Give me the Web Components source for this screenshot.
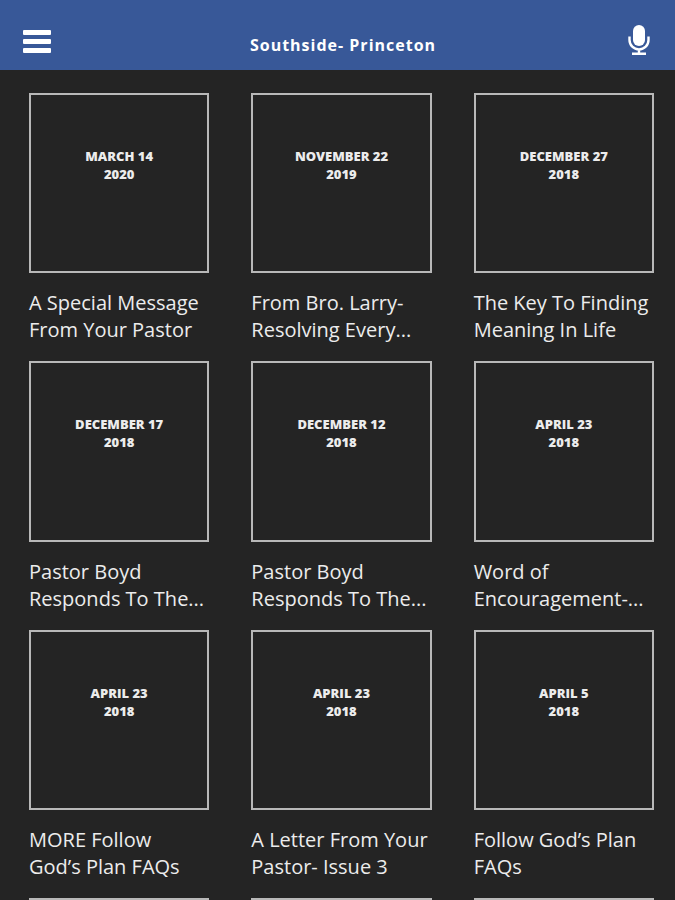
<!DOCTYPE html>
<html lang="en">
<head>
<meta charset="utf-8">
<meta name="viewport" content="width=device-width, initial-scale=1">
<title>Southside- Princeton</title>
<style>
html { scrollbar-width: none; }
html, body { margin: 0; background: #242424; color: #ececec; font-family: "Open Sans", sans-serif; }
</style>
</head>
<body>
<messages-page></messages-page>
<script>
const define = (name, html, setup) => {
  const template = document.createElement('template');
  template.innerHTML = html;
  customElements.define(name, class extends HTMLElement {
    constructor() {
      super();
      this.attachShadow({ mode: 'open' }).append(template.content.cloneNode(true));
      if (setup) setup(this);
    }
  });
};

define('app-header', `
<style>
:host { display: block; background: #385898; color: #fff; }
header { display: grid; grid-template-columns: 50px 1fr 40px; align-items: center; min-height: 70px; padding: 12px 16px 0 17px; box-sizing: border-box; }
h1 { margin: 0; padding-top: 8px; font-size: 16px; line-height: 24px; font-weight: 700; text-align: center; letter-spacing: 1px; }
button { display: flex; align-items: center; justify-content: center; width: 40px; height: 40px; padding: 0; border: 0; background: none; color: inherit; }
svg { display: block; fill: currentColor; }
</style>
<header>
  <button type="button" aria-label="Menu"><svg width="28" height="24" viewBox="0 0 28 24"><rect width="28" height="5" y="1" rx="1"/><rect width="28" height="5" y="10" rx="1"/><rect width="28" height="5" y="19" rx="1"/></svg></button>
  <h1><slot></slot></h1>
  <button type="button" aria-label="Voice search"><svg width="22" height="32" viewBox="0 0 22 32"><rect x="5" y="0" width="12" height="21" rx="6"/><path d="M1.5 11.5V15a9.5 9.5 0 0 0 19 0v-3.500M11 24.500v4M4 28.700h14" fill="none" stroke="currentColor" stroke-width="2.400"/></svg></button>
</header>`);

define('message-card', `
<style>
:host { display: block; }
a { display: block; color: inherit; text-decoration: none; }
time { display: flex; flex-direction: column; aspect-ratio: 1; box-sizing: border-box; border: 2px solid #b8b8b8; padding-top: 52px; text-align: center; font-size: 13px; line-height: 18px; font-weight: 800; }
h2 { margin: 16px 0 0; font-size: 20px; line-height: 27px; font-weight: 400; min-height: 54px; white-space: nowrap; }
</style>
<a href="#">
  <time><slot name="day"></slot><slot name="year"></slot></time>
  <h2><slot name="first"></slot><br><slot name="second"></slot></h2>
</a>`);

define('messages-page', `
<style>
:host { display: block; }
main { display: grid; grid-template-columns: repeat(3, minmax(0, 1fr)); column-gap: 42px; row-gap: 18px; padding: 23px 21px 0 29px; }
</style>
<app-header>Southside- Princeton</app-header>
<main></main>`, host => {
  const messages = [
    ['MARCH 14', '2020', 'A Special Message', 'From Your Pastor'],
    ['NOVEMBER 22', '2019', 'From Bro. Larry-', 'Resolving Every...'],
    ['DECEMBER 27', '2018', 'The Key To Finding', 'Meaning In Life'],
    ['DECEMBER 17', '2018', 'Pastor Boyd', 'Responds To The...'],
    ['DECEMBER 12', '2018', 'Pastor Boyd', 'Responds To The...'],
    ['APRIL 23', '2018', 'Word of', 'Encouragement-...'],
    ['APRIL 23', '2018', 'MORE Follow', 'God’s Plan FAQs'],
    ['APRIL 23', '2018', 'A Letter From Your', 'Pastor- Issue 3'],
    ['APRIL 5', '2018', 'Follow God’s Plan', 'FAQs'],
    [], [], []
  ];
  const names = ['day', 'year', 'first', 'second'];
  const main = host.shadowRoot.querySelector('main');
  for (const message of messages) {
    const card = document.createElement('message-card');
    message.forEach((text, i) => {
      const part = document.createElement('span');
      part.slot = names[i];
      part.textContent = text;
      card.append(part);
    });
    main.append(card);
  }
});
</script>
</body>
</html>
